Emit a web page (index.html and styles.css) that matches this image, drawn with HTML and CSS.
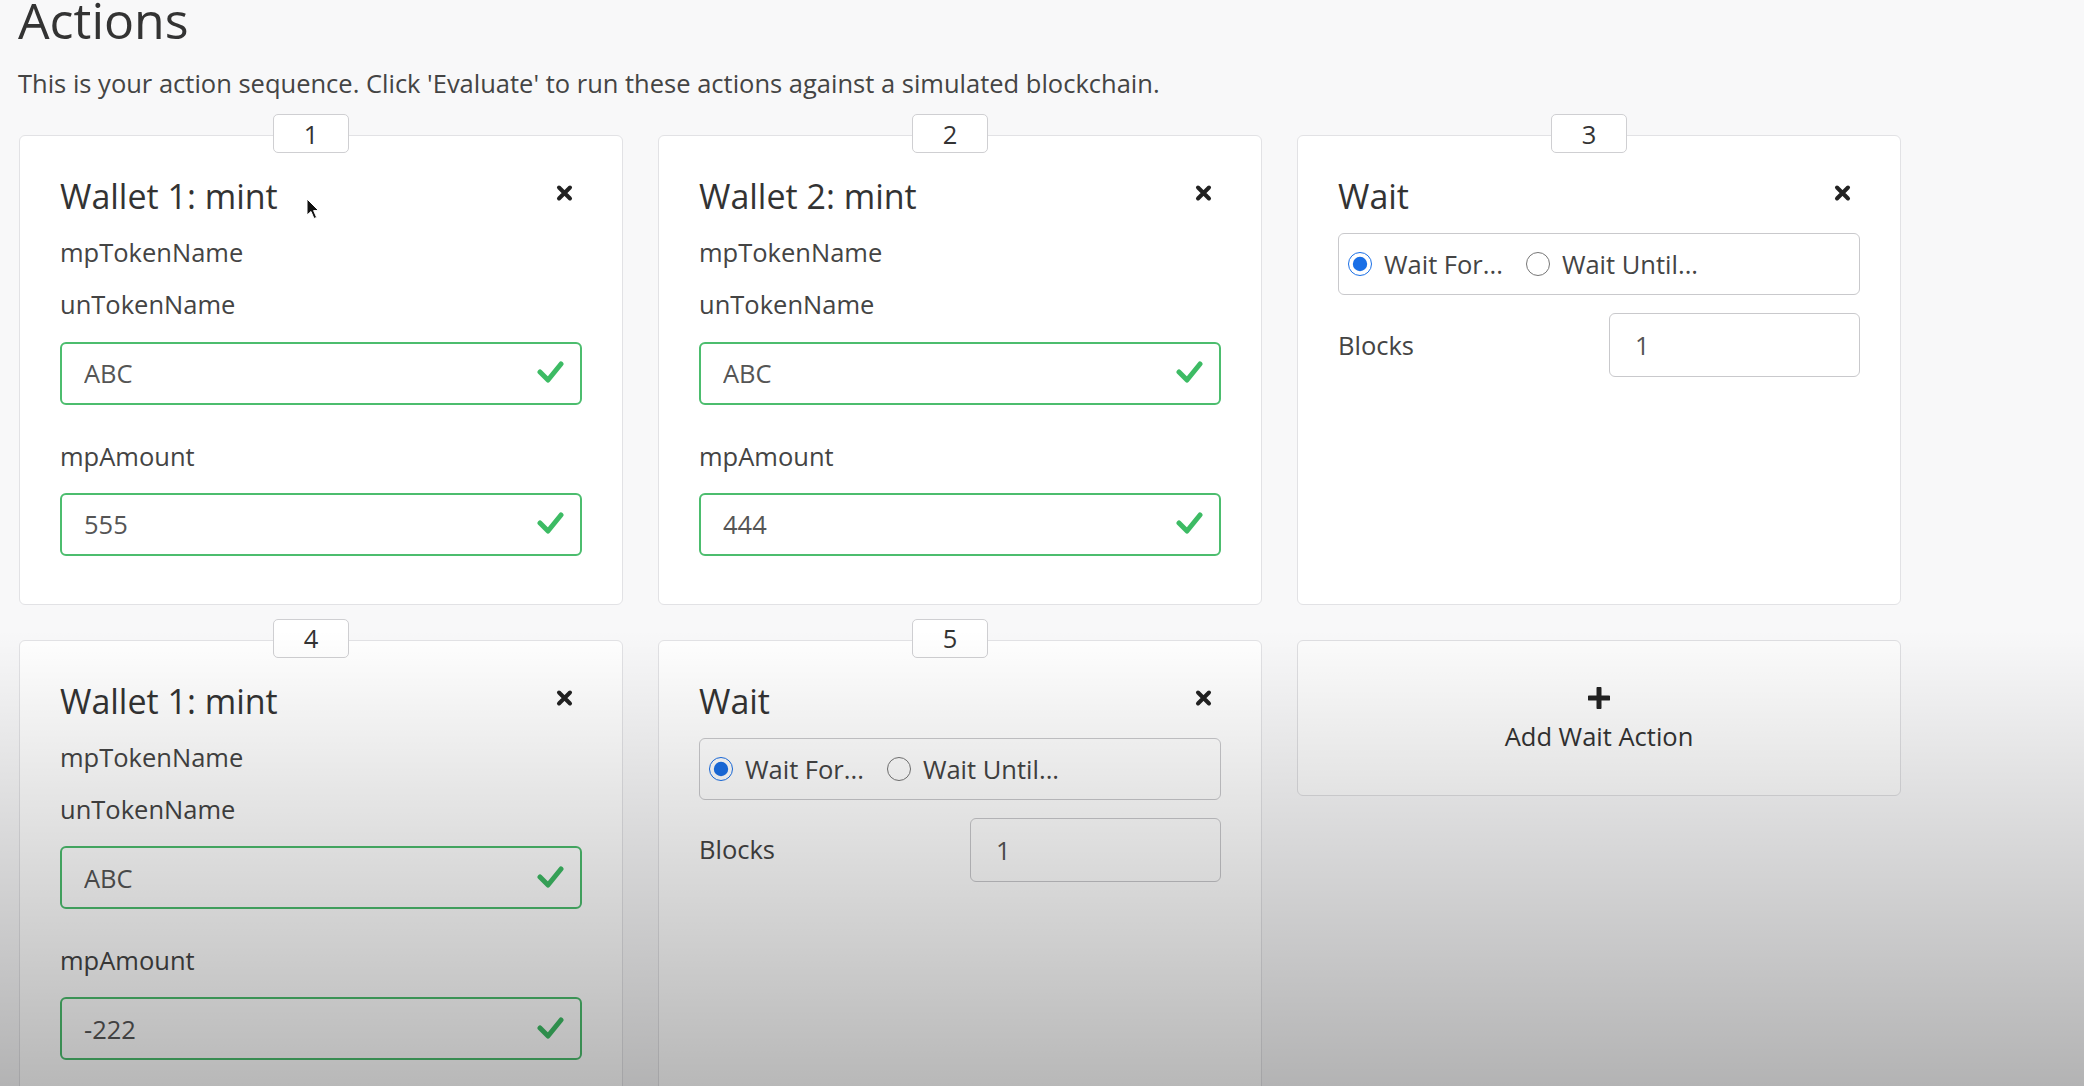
FILE: index.html
```html
<!DOCTYPE html>
<html lang="en">
<head>
<meta charset="utf-8">
<title>Actions</title>
<link rel="stylesheet" href="styles.css">
</head>
<body>
<div class="page">
  <h1 class="page-title">Actions</h1>
  <p class="lead">This is your action sequence. Click 'Evaluate' to run these actions against a simulated blockchain.</p>

  <div class="actions">
    <div class="card">
      <div class="badge">1</div>
      <div class="card-head">
        <h3 class="card-title">Wallet 1: mint</h3>
        <svg class="close" viewBox="0 0 17 18"><path d="M3 3.5 L14 14.5 M14 3.5 L3 14.5"/></svg>
      </div>
      <div class="label nested">mpTokenName</div>
      <div class="label before-input">unTokenName</div>
      <div class="field">
        <input class="form-input valid" value="ABC" readonly>
        <svg class="check" viewBox="0 0 27 24"><path d="M3 12 L11 20 L24 4"/></svg>
      </div>
      <div class="label before-input">mpAmount</div>
      <div class="field last">
        <input class="form-input valid" value="555" readonly>
        <svg class="check" viewBox="0 0 27 24"><path d="M3 12 L11 20 L24 4"/></svg>
      </div>
    </div>

    <div class="card">
      <div class="badge">2</div>
      <div class="card-head">
        <h3 class="card-title">Wallet 2: mint</h3>
        <svg class="close" viewBox="0 0 17 18"><path d="M3 3.5 L14 14.5 M14 3.5 L3 14.5"/></svg>
      </div>
      <div class="label nested">mpTokenName</div>
      <div class="label before-input">unTokenName</div>
      <div class="field">
        <input class="form-input valid" value="ABC" readonly>
        <svg class="check" viewBox="0 0 27 24"><path d="M3 12 L11 20 L24 4"/></svg>
      </div>
      <div class="label before-input">mpAmount</div>
      <div class="field last">
        <input class="form-input valid" value="444" readonly>
        <svg class="check" viewBox="0 0 27 24"><path d="M3 12 L11 20 L24 4"/></svg>
      </div>
    </div>

    <div class="card">
      <div class="badge">3</div>
      <div class="card-head">
        <h3 class="card-title">Wait</h3>
        <svg class="close" viewBox="0 0 17 18"><path d="M3 3.5 L14 14.5 M14 3.5 L3 14.5"/></svg>
      </div>
      <div class="radio-box">
        <label class="radio"><input type="radio" name="w3" checked><span>Wait For...</span></label>
        <label class="radio"><input type="radio" name="w3"><span>Wait Until...</span></label>
      </div>
      <div class="blocks-row">
        <div class="label">Blocks</div>
        <input class="form-input plain" value="1" readonly>
      </div>
    </div>

    <div class="card">
      <div class="badge">4</div>
      <div class="card-head">
        <h3 class="card-title">Wallet 1: mint</h3>
        <svg class="close" viewBox="0 0 17 18"><path d="M3 3.5 L14 14.5 M14 3.5 L3 14.5"/></svg>
      </div>
      <div class="label nested">mpTokenName</div>
      <div class="label before-input">unTokenName</div>
      <div class="field">
        <input class="form-input valid" value="ABC" readonly>
        <svg class="check" viewBox="0 0 27 24"><path d="M3 12 L11 20 L24 4"/></svg>
      </div>
      <div class="label before-input">mpAmount</div>
      <div class="field last">
        <input class="form-input valid" value="-222" readonly>
        <svg class="check" viewBox="0 0 27 24"><path d="M3 12 L11 20 L24 4"/></svg>
      </div>
    </div>

    <div class="card">
      <div class="badge">5</div>
      <div class="card-head">
        <h3 class="card-title">Wait</h3>
        <svg class="close" viewBox="0 0 17 18"><path d="M3 3.5 L14 14.5 M14 3.5 L3 14.5"/></svg>
      </div>
      <div class="radio-box">
        <label class="radio"><input type="radio" name="w5" checked><span>Wait For...</span></label>
        <label class="radio"><input type="radio" name="w5"><span>Wait Until...</span></label>
      </div>
      <div class="blocks-row">
        <div class="label">Blocks</div>
        <input class="form-input plain" value="1" readonly>
      </div>
    </div>

    <div class="card add-card">
      <svg class="plus" viewBox="0 0 22 22"><path d="M11 1.5 V20.5 M1.5 11 H20.5"/></svg>
      <div class="add-label">Add Wait Action</div>
    </div>
  </div>

  <div class="shade"></div>
  <svg class="cursor" viewBox="0 0 14 22"><path d="M1 1 L1 17 L5 13.5 L8 20.5 L10.6 19.4 L7.6 12.6 L12.6 12.6 Z"/></svg>
</div>
</body>
</html>
```

FILE: styles.css
```css
html, body {
  margin: 0;
  padding: 0;
}

body {
  background: #f8f8f9;
  font-family: "Open Sans", "Noto Sans", sans-serif;
  color: #333;
}

.page {
  position: relative;
  height: 1086px;
  overflow: hidden;
  padding: 0 18px;
  box-sizing: border-box;
}

.page-title {
  font-size: 50px;
  font-weight: 400;
  line-height: 1.2;
  margin: -10px 0 0;
  color: #333;
}

.lead {
  font-size: 25.5px;
  line-height: 1.5;
  margin: 14px 0 0;
  color: #444;
}

.actions {
  display: grid;
  grid-template-columns: repeat(3, 604px);
  gap: 35px;
  margin: 33px 0 0 1px;
}

.card {
  position: relative;
  background: #fff;
  border: 1px solid #e2e2e5;
  border-radius: 6px;
  padding: 40px;
  box-sizing: border-box;
}

.badge {
  position: absolute;
  top: -22px;
  left: 253px;
  width: 76px;
  height: 39px;
  box-sizing: border-box;
  border: 1px solid #cfcfd2;
  border-radius: 5px;
  background: #fff;
  display: flex;
  align-items: center;
  justify-content: center;
  font-size: 25.5px;
  color: #333;
}

.card-head {
  display: flex;
  justify-content: space-between;
  align-items: flex-start;
}

.card-title {
  font-size: 34px;
  font-weight: 400;
  line-height: 1.2;
  margin: 0 0 16px;
  color: #333;
}

.close {
  width: 17px;
  height: 18px;
  margin: 8px 9px 0 0;
  flex: none;
}

.close path {
  stroke: #222;
  stroke-width: 4;
  stroke-linecap: round;
  fill: none;
}

.label {
  font-size: 25.5px;
  line-height: 1.5;
  color: #444;
}

.label.nested {
  margin-bottom: 14px;
}

.label.before-input {
  margin-bottom: 18px;
}

.field {
  position: relative;
  margin-bottom: 32px;
}

.field.last {
  margin-bottom: 8px;
}

.form-input {
  display: block;
  width: 100%;
  height: 63px;
  box-sizing: border-box;
  border-radius: 6px;
  font-family: "Open Sans", "Noto Sans", sans-serif;
  font-size: 25.5px;
  color: #555;
  background: transparent;
  outline: none;
}

.form-input.valid {
  border: 2px solid #4cbd6e;
  padding: 0 60px 0 22px;
}

.form-input.plain {
  height: 64px;
  border: 1.5px solid #c9c9cc;
  padding: 0 20px 0 25px;
}

.check {
  position: absolute;
  right: 18px;
  top: 50%;
  width: 27px;
  height: 24px;
  margin-top: -13px;
}

.check path {
  stroke: #3dbb64;
  stroke-width: 5;
  stroke-linecap: round;
  stroke-linejoin: round;
  fill: none;
}

.radio-box {
  display: flex;
  align-items: center;
  gap: 23px;
  height: 62px;
  box-sizing: border-box;
  border: 1.5px solid #c9c9cc;
  border-radius: 6px;
  padding: 0 9px;
}

.radio {
  display: flex;
  align-items: center;
  gap: 12px;
  font-size: 25.5px;
  color: #444;
}

.radio input {
  width: 24px;
  height: 24px;
  margin: 0;
  accent-color: #1a6fe6;
}

.blocks-row {
  display: grid;
  grid-template-columns: 1fr 251px;
  align-items: center;
  margin-top: 18px;
}

.add-card {
  align-self: start;
  display: flex;
  flex-direction: column;
  align-items: center;
  padding: 46px 0 40px;
  background: #fcfcfc;
  border-color: #dedee1;
}

.plus {
  width: 22px;
  height: 22px;
  margin-bottom: 8px;
}

.plus path {
  stroke: #222;
  stroke-width: 5;
  stroke-linecap: round;
  fill: none;
}

.add-label {
  font-size: 25.5px;
  line-height: 1.5;
  color: #333;
}

.shade {
  position: absolute;
  left: 0;
  right: 0;
  top: 630px;
  height: 456px;
  background: linear-gradient(to bottom, rgba(0, 0, 0, 0) 0%, rgba(0, 0, 0, 0.28) 100%);
  pointer-events: none;
}

.cursor {
  position: absolute;
  left: 306px;
  top: 198px;
  width: 14px;
  height: 22px;
}

.cursor path {
  fill: #111;
  stroke: #fff;
  stroke-width: 1;
}
```
